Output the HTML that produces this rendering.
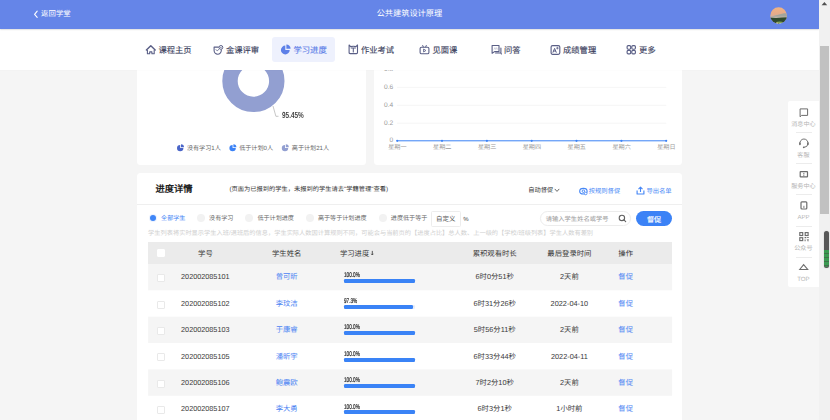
<!DOCTYPE html>
<html lang="zh-CN">
<head>
<meta charset="utf-8">
<title>公共建筑设计原理</title>
<style>
*{margin:0;padding:0;box-sizing:border-box;}
html,body{width:830px;height:420px;overflow:hidden;background:#f5f5f5;}
body{position:relative;font-family:"Liberation Sans",sans-serif;color:#333;-webkit-font-smoothing:antialiased;text-rendering:geometricPrecision;}
.abs{position:absolute;}
.t{position:absolute;white-space:nowrap;line-height:1;}
.c{transform:translateX(-50%);}
/* header */
#hdr{left:0;top:0;width:819px;height:28.5px;background:#6585e8;box-shadow:0 0.6px 1.6px rgba(0,0,0,.22);}
#nav{left:0;top:28.5px;width:819px;height:41.5px;background:#fff;box-shadow:0 0.4px 1.2px rgba(0,0,0,.05);}
.nt{font-size:8.3px;color:#3a3e5c;top:46.1px;-webkit-text-stroke:0.12px currentColor;}
.ni{position:absolute;top:43.5px;width:12px;height:12px;}
/* cards */
.card{background:#fff;border-radius:3.5px;}
/* table */
.th{font-size:7.35px;color:#333;}
.td{font-size:7.35px;color:#3a3a3a;}
.idn{font-size:7.28px;}
.lnk{color:#4c84f3;}
.nm{font-size:7.35px;}
.row{left:148.1px;width:524px;height:26.33px;background:#f5f5f5;}
.cb{position:absolute;left:157.2px;width:8.2px;height:8.2px;background:#fff;border:0.6px solid #e9e9e9;border-radius:1px;}
.pl{font-size:6.9px;color:#2e2e2e;transform:scaleX(.68);transform-origin:0 50%;left:343.9px;-webkit-text-stroke:0.22px #2e2e2e;}
.pb{position:absolute;left:343.9px;height:4.1px;border-radius:1.2px;background:#3a83f6;}
.pbg{position:absolute;left:343.9px;width:71.1px;height:4.1px;border-radius:1.2px;background:#e9eef8;}
/* filter */
.ft{font-size:6.1px;color:#666;top:216px;}
.rd{position:absolute;width:8.4px;height:8.4px;border-radius:50%;background:#f2f2f2;top:213.9px;}
/* side */
.sl{font-size:6.1px;color:#b4b4b4;left:803.4px;transform:translateX(-50%);}
.sd{position:absolute;left:795.5px;width:16px;height:0.6px;background:#ececec;}
.si{position:absolute;left:798px;width:12px;height:12px;}
.ax{font-size:6.6px;color:#999;}
.lg{font-size:6.1px;color:#666;top:146.2px;}
</style>
</head>
<body>

<!-- ========== content cards (under nav) ========== -->
<div class="abs card" id="card1" style="left:137.4px;top:40px;width:228.2px;height:124.6px;"></div>
<div class="abs card" id="card2" style="left:373.6px;top:40px;width:308.8px;height:124.6px;"></div>
<div class="abs card" id="card3" style="left:137.4px;top:173.3px;width:545px;height:260px;border-radius:3.5px 3.5px 0 0;"></div>

<!-- donut -->
<svg class="abs" style="left:137.4px;top:40px;" width="229" height="124" viewBox="137.4 40 229 124">
  <circle cx="253.8" cy="81" r="23.4" fill="none" stroke="#929fd1" stroke-width="15.4"/>
  <polyline points="273.4,106 276.3,116.3 278.9,116.3" fill="none" stroke="#999" stroke-width="0.55"/>
</svg>
<div class="t" style="left:282.1px;top:110.9px;font-size:8.8px;font-weight:bold;color:#444;transform:scaleX(.73);transform-origin:0 50%;">95.45%</div>

<!-- legend -->
<svg class="abs" style="left:176px;top:144.2px;" width="120" height="8" viewBox="0 0 120 8">
  <g id="pie1"><path d="M4.2 0.9 A3.2 3.2 0 1 0 7.4 4.1 L4.2 4.1Z" fill="#4a65c8"/><path d="M5 0.2 A3.1 3.1 0 0 1 8 3.3 L5 3.3Z" fill="#4a65c8"/></g>
  <g transform="translate(52.4 0)"><path d="M4.2 0.9 A3.2 3.2 0 1 0 7.4 4.1 L4.2 4.1Z" fill="#3b82f6"/><path d="M5 0.2 A3.1 3.1 0 0 1 8 3.3 L5 3.3Z" fill="#3b82f6"/></g>
  <g transform="translate(104.8 0)"><path d="M4.2 0.9 A3.2 3.2 0 1 0 7.4 4.1 L4.2 4.1Z" fill="#929fd1"/><path d="M5 0.2 A3.1 3.1 0 0 1 8 3.3 L5 3.3Z" fill="#929fd1"/></g>
</svg>
<div class="t lg" style="left:186.9px;">没有学习1人</div>
<div class="t lg" style="left:239.2px;">低于计划0人</div>
<div class="t lg" style="left:291.8px;">高于计划21人</div>

<!-- line chart -->
<svg class="abs" style="left:373.2px;top:40px;" width="309" height="124" viewBox="373.2 40 309 124">
  <g stroke="#eeeeee" stroke-width="0.6">
    <line x1="397.2" x2="666.4" y1="69.5" y2="69.5"/>
    <line x1="397.2" x2="666.4" y1="87.4" y2="87.4"/>
    <line x1="397.2" x2="666.4" y1="105.3" y2="105.3"/>
    <line x1="397.2" x2="666.4" y1="123.2" y2="123.2"/>
  </g>
  <line x1="397.2" x2="666.6" y1="140.8" y2="140.8" stroke="#3b82f6" stroke-width="1"/>
  <g fill="#3b82f6">
    <circle cx="397.4" cy="140.8" r="1.1"/><circle cx="442.2" cy="140.8" r="1.1"/><circle cx="487.1" cy="140.8" r="1.1"/>
    <circle cx="531.9" cy="140.8" r="1.1"/><circle cx="576.7" cy="140.8" r="1.1"/><circle cx="621.6" cy="140.8" r="1.1"/>
    <circle cx="666.4" cy="140.8" r="1.1"/>
  </g>
</svg>
<div class="t ax" style="right:436.8px;top:67.0px;">0.8</div>
<div class="t ax" style="right:436.8px;top:84.8px;">0.6</div>
<div class="t ax" style="right:436.8px;top:102.7px;">0.4</div>
<div class="t ax" style="right:436.8px;top:120.6px;">0.2</div>
<div class="t ax" style="right:436.8px;top:138.3px;">0</div>
<div class="t ax c" style="left:397.4px;top:144.6px;font-size:6.1px;">星期一</div>
<div class="t ax c" style="left:442.2px;top:144.6px;font-size:6.1px;">星期二</div>
<div class="t ax c" style="left:487.1px;top:144.6px;font-size:6.1px;">星期三</div>
<div class="t ax c" style="left:531.9px;top:144.6px;font-size:6.1px;">星期四</div>
<div class="t ax c" style="left:576.7px;top:144.6px;font-size:6.1px;">星期五</div>
<div class="t ax c" style="left:621.6px;top:144.6px;font-size:6.1px;">星期六</div>
<div class="t ax c" style="left:666.4px;top:144.6px;font-size:6.1px;">星期日</div>

<!-- ========== card3 : progress details ========== -->
<div class="t" style="left:155.4px;top:184.6px;font-size:9.3px;font-weight:bold;color:#222;">进度详情</div>
<div class="t" style="left:229.4px;top:187px;font-size:6.25px;color:#333;">(页面为已报到的学生，未报到的学生请去"学籍管理"查看)</div>
<div class="t" style="left:528.3px;top:187.5px;font-size:6.25px;color:#333;">自动督促</div>
<svg class="abs" style="left:554.2px;top:187.5px;" width="6" height="5" viewBox="0 0 6 5"><polyline points="1,1.2 3,3.4 5,1.2" fill="none" stroke="#444" stroke-width="0.8" stroke-linecap="round" stroke-linejoin="round"/></svg>
<svg class="abs" style="left:578.8px;top:186.7px;" width="9" height="9" viewBox="0 0 9 9"><ellipse cx="4.4" cy="4.2" rx="3.7" ry="2.8" fill="none" stroke="#4687f6" stroke-width="1.15"/><circle cx="4.4" cy="4.2" r="1.25" fill="none" stroke="#4687f6" stroke-width="0.95"/><circle cx="6.7" cy="6.5" r="1.3" fill="#fff" stroke="#4687f6" stroke-width="0.8"/></svg>
<div class="t" style="left:588.7px;top:189.1px;font-size:6.3px;color:#4687f6;">按规则督促</div>
<svg class="abs" style="left:636px;top:185.6px;" width="9" height="9" viewBox="0 0 9 9"><path d="M1.1 4.6 V8 H7.9 V4.6" fill="none" stroke="#4687f6" stroke-width="1.15" stroke-linejoin="round"/><path d="M4.5 6 V1.4 M2.5 3.1 L4.5 1.1 L6.5 3.1" fill="none" stroke="#4687f6" stroke-width="1.1" stroke-linejoin="round"/></svg>
<div class="t" style="left:646.4px;top:189.1px;font-size:6.3px;color:#4687f6;">导出名单</div>
<div class="abs" style="left:137.4px;top:203.9px;width:545px;height:0.7px;background:#efefef;"></div>

<!-- filter row -->
<div class="abs" style="left:150.1px;top:215.2px;width:5.9px;height:5.9px;border-radius:50%;background:#3f86f7;box-shadow:0 0 0 1.1px #edf3fe;"></div>
<div class="t ft" style="left:161.1px;color:#3b82f6;">全部学生</div>
<div class="rd" style="left:196.8px;"></div>
<div class="t ft" style="left:209.1px;">没有学习</div>
<div class="rd" style="left:245.1px;"></div>
<div class="t ft" style="left:257.4px;">低于计划进度</div>
<div class="rd" style="left:305.9px;"></div>
<div class="t ft" style="left:317.9px;">高于等于计划进度</div>
<div class="rd" style="left:378.7px;"></div>
<div class="t ft" style="left:390.8px;">进度低于等于</div>
<div class="abs" style="left:431.3px;top:211.4px;width:29.4px;height:15.2px;border:0.6px solid #ededed;border-radius:1.5px;background:#fff;"></div>
<div class="t" style="left:436px;top:217.1px;font-size:6.45px;color:#555;">自定义</div>
<div class="t" style="left:463.2px;top:216.9px;font-size:6px;color:#444;">%</div>
<div class="abs" style="left:540.2px;top:211.3px;width:90.6px;height:14.8px;border:0.6px solid #ececec;border-radius:7.4px;background:#fff;"></div>
<div class="t" style="left:545.8px;top:217.1px;font-size:6.28px;color:#999;">请输入学生姓名或学号</div>
<svg class="abs" style="left:618px;top:213.9px;" width="9" height="9" viewBox="0 0 9 9"><circle cx="3.9" cy="3.9" r="2.7" fill="none" stroke="#606060" stroke-width="1.1"/><line x1="5.9" y1="5.9" x2="7.7" y2="7.7" stroke="#606060" stroke-width="1.1" stroke-linecap="round"/></svg>
<div class="abs" style="left:636.1px;top:211px;width:35.9px;height:15px;border-radius:7.5px;background:#3b82f6;"></div>
<div class="t" style="left:646.9px;top:216.2px;font-size:7.2px;color:#fff;-webkit-text-stroke:0.15px #fff;">督促</div>
<div class="t" style="left:148.1px;top:231px;font-size:6.22px;color:#cfcfcf;">学生列表将实时显示学生入班/退班后的信息，学生实际人数因计算规则不同，可能会与当前页的【进度占比】总人数、上一级的【学校/班级列表】学生人数有差别</div>

<!-- table -->
<div class="abs" style="left:148.1px;top:241.9px;width:524px;height:22.2px;background:#ebebeb;"></div>
<div class="cb" style="top:248.8px;border-color:#fff;"></div>
<div class="t th c" style="left:205.4px;top:249.7px;">学号</div>
<div class="t th c" style="left:286.7px;top:249.7px;">学生姓名</div>
<div class="t th" style="left:339.9px;top:249.7px;">学习进度</div>
<svg class="abs" style="left:370.4px;top:250.2px;" width="5" height="7" viewBox="0 0 5 7"><path d="M2.3 0.9 V4.8 M1.3 3.8 L2.3 5 L3.3 3.8" fill="none" stroke="#444" stroke-width="0.9"/></svg>
<div class="t th c" style="left:494.7px;top:249.7px;">累积观看时长</div>
<div class="t th c" style="left:569.4px;top:249.7px;">最后登录时间</div>
<div class="t th" style="left:618.3px;top:249.7px;">操作</div>

<!--ROWS-->
<!-- row 1 -->
<svg class="abs" style="left:148px;top:263px;" width="525" height="29" viewBox="0 0 525 29"><rect x="0.1" y="1" width="524" height="26.35" fill="#f5f5f5"/></svg>
<div class="cb" style="top:274.18px;"></div>
<div class="t td idn c" style="left:205.3px;top:273.48px;">202002085101</div>
<div class="t td nm c lnk" style="left:286.7px;top:273.48px;">曾可昕</div>
<div class="t pl" style="top:272.78px;">100.0%</div>
<div class="pbg" style="top:278.57px;"></div>
<div class="pb" style="top:278.57px;width:71.1px;"></div>
<div class="t td c" style="left:494.7px;top:273.48px;">6时0分51秒</div>
<div class="t td c" style="left:569.4px;top:273.48px;">2天前</div>
<div class="t td lnk" style="left:618.3px;top:273.48px;">督促</div>
<!-- row 2 -->
<div class="cb" style="top:300.53px;"></div>
<div class="t td idn c" style="left:205.3px;top:299.83px;">202002085102</div>
<div class="t td nm c lnk" style="left:286.7px;top:299.83px;">李玟洁</div>
<div class="t pl" style="top:299.13px;">97.3%</div>
<div class="pbg" style="top:304.93px;"></div>
<div class="pb" style="top:304.93px;width:69.18px;"></div>
<div class="t td c" style="left:494.7px;top:299.83px;">6时31分26秒</div>
<div class="t td c" style="left:569.4px;top:299.83px;">2022-04-10</div>
<div class="t td lnk" style="left:618.3px;top:299.83px;">督促</div>
<!-- row 3 -->
<svg class="abs" style="left:148px;top:315px;" width="525" height="29" viewBox="0 0 525 29"><rect x="0.1" y="1.7" width="524" height="26.35" fill="#f5f5f5"/></svg>
<div class="cb" style="top:326.88px;"></div>
<div class="t td idn c" style="left:205.3px;top:326.18px;">202002085103</div>
<div class="t td nm c lnk" style="left:286.7px;top:326.18px;">于康睿</div>
<div class="t pl" style="top:325.48px;">100.0%</div>
<div class="pbg" style="top:331.27px;"></div>
<div class="pb" style="top:331.27px;width:71.1px;"></div>
<div class="t td c" style="left:494.7px;top:326.18px;">5时56分11秒</div>
<div class="t td c" style="left:569.4px;top:326.18px;">2天前</div>
<div class="t td lnk" style="left:618.3px;top:326.18px;">督促</div>
<!-- row 4 -->
<div class="cb" style="top:353.23px;"></div>
<div class="t td idn c" style="left:205.3px;top:352.53px;">202002085105</div>
<div class="t td nm c lnk" style="left:286.7px;top:352.53px;">潘昕宇</div>
<div class="t pl" style="top:351.83px;">100.0%</div>
<div class="pbg" style="top:357.62px;"></div>
<div class="pb" style="top:357.62px;width:71.1px;"></div>
<div class="t td c" style="left:494.7px;top:352.53px;">6时33分44秒</div>
<div class="t td c" style="left:569.4px;top:352.53px;">2022-04-11</div>
<div class="t td lnk" style="left:618.3px;top:352.53px;">督促</div>
<!-- row 5 -->
<svg class="abs" style="left:148px;top:368px;" width="525" height="29" viewBox="0 0 525 29"><rect x="0.1" y="1.4" width="524" height="26.35" fill="#f5f5f5"/></svg>
<div class="cb" style="top:379.57px;"></div>
<div class="t td idn c" style="left:205.3px;top:378.88px;">202002085106</div>
<div class="t td nm c lnk" style="left:286.7px;top:378.88px;">鲍震欧</div>
<div class="t pl" style="top:378.18px;">100.0%</div>
<div class="pbg" style="top:383.97px;"></div>
<div class="pb" style="top:383.97px;width:71.1px;"></div>
<div class="t td c" style="left:494.7px;top:378.88px;">7时2分10秒</div>
<div class="t td c" style="left:569.4px;top:378.88px;">2天前</div>
<div class="t td lnk" style="left:618.3px;top:378.88px;">督促</div>
<!-- row 6 -->
<div class="cb" style="top:405.93px;"></div>
<div class="t td idn c" style="left:205.3px;top:405.23px;">202002085107</div>
<div class="t td nm c lnk" style="left:286.7px;top:405.23px;">李大勇</div>
<div class="t pl" style="top:404.53px;">100.0%</div>
<div class="pbg" style="top:410.32px;"></div>
<div class="pb" style="top:410.32px;width:71.1px;"></div>
<div class="t td c" style="left:494.7px;top:405.23px;">6时3分1秒</div>
<div class="t td c" style="left:569.4px;top:405.23px;">1小时前</div>
<div class="t td lnk" style="left:618.3px;top:405.23px;">督促</div>
<!--/ROWS-->

<!-- ========== fixed header & nav (over content) ========== -->
<div class="abs" id="nav"></div>
<div class="abs" style="left:272.3px;top:36.8px;width:62.3px;height:25.6px;border-radius:3px;background:#eef1fd;"></div>
<div class="abs" id="hdr"></div>
<svg class="abs" style="left:33.4px;top:9.6px;" width="6" height="9" viewBox="0 0 6 9"><polyline points="4.2,1.2 1.6,4.3 4.2,7.4" fill="none" stroke="#fff" stroke-width="1.1" stroke-linecap="round" stroke-linejoin="round"/></svg>
<div class="t" style="left:41.1px;top:9.9px;font-size:7.4px;color:#fff;">返回学堂</div>
<div class="t c" style="left:409.4px;top:10.2px;font-size:8.2px;color:#fff;">公共建筑设计原理</div>
<svg class="abs" style="left:770px;top:7px;" width="17" height="17" viewBox="0 0 17 17">
  <defs>
    <clipPath id="avc"><circle cx="8.6" cy="8.5" r="8.3"/></clipPath>
    <linearGradient id="avg" x1="0" y1="0" x2="0" y2="1"><stop offset="0" stop-color="#f3b380"/><stop offset="0.42" stop-color="#e4ab8b"/><stop offset="0.6" stop-color="#cfb0a0"/></linearGradient>
    <filter id="avb" x="-20%" y="-20%" width="140%" height="140%"><feGaussianBlur stdDeviation="0.55"/></filter>
  </defs>
  <g clip-path="url(#avc)">
    <rect x="0" y="0" width="17" height="17" fill="url(#avg)"/>
    <g filter="url(#avb)">
      <path d="M-1 10.2 L5 8.6 L10 7.2 L14 6.2 L18 6.6 V12 H-1Z" fill="#a3a59c"/>
      <rect x="-1" y="9.6" width="19" height="1.6" fill="#c9b9ab" opacity="0.85"/>
      <path d="M-1 10.6 L6 10.9 L12 10.6 L18 10.2 V18 H-1Z" fill="#2f4a2d"/>
      <ellipse cx="9.6" cy="15.6" rx="3.2" ry="1.1" fill="#7ea258"/>
      <ellipse cx="7" cy="16.2" rx="1.3" ry="0.7" fill="#d8c89a"/>
      <ellipse cx="10.6" cy="16.6" rx="1.4" ry="0.6" fill="#d2dcc2"/>
    </g>
  </g>
</svg>

<!-- nav items -->
<svg class="ni" style="left:144.6px;" viewBox="0 0 12 12"><path d="M1.4 6.1 L5.8 1.8 L10.2 6.1" fill="none" stroke="#5a5f86" stroke-width="1.45" stroke-linejoin="round" stroke-linecap="round"/><path d="M2.4 6 V9.8 H4.7 V7.9 H6.9 V9.8 H9.2 V6" fill="none" stroke="#5a5f86" stroke-width="1.1" stroke-linejoin="round"/></svg>
<div class="t nt" style="left:158.4px;">课程主页</div>
<svg class="ni" style="left:212.5px;" viewBox="0 0 12 12"><path d="M5.4 3.1 H1.1 V6.6 A3.6 3.6 0 0 0 8.3 6.6 V5.9" fill="none" stroke="#5a5f86" stroke-width="1.1" stroke-linecap="round" stroke-linejoin="round"/><circle cx="7.9" cy="3.4" r="1.9" fill="#fff" stroke="#5a5f86" stroke-width="1"/><circle cx="7.9" cy="3.4" r="0.6" fill="#5a5f86"/><path d="M3 5.6 L4.2 6.9 L6 5.2" fill="none" stroke="#5a5f86" stroke-width="0.8" stroke-linecap="round" stroke-linejoin="round"/></svg>
<div class="t nt" style="left:225.9px;">金课评审</div>
<svg class="ni" style="left:279.5px;" viewBox="0 0 12 12"><path d="M5.3 1.6 A4.4 4.4 0 1 0 9.7 6 L5.3 6Z" fill="#5d80e8"/><path d="M6.4 0.6 A4.2 4.2 0 0 1 10.6 4.8 L6.4 4.8Z" fill="#5d80e8"/></svg>
<div class="t nt" style="left:293.5px;color:#5d80e8;">学习进度</div>
<svg class="ni" style="left:347.5px;" viewBox="0 0 12 12"><path d="M1.1 1 L2.6 2.6 Q5.3 1.9 8 2.6 L9.5 1 V8.6 Q9.5 9.6 8.5 9.6 H2.1 Q1.1 9.6 1.1 8.6Z" fill="none" stroke="#5a5f86" stroke-width="1.1" stroke-linejoin="round"/><path d="M3.2 4 H7.4 M5.3 4 V7.9" fill="none" stroke="#5a5f86" stroke-width="1.05" stroke-linecap="round"/></svg>
<div class="t nt" style="left:360.9px;">作业考试</div>
<svg class="ni" style="left:418.6px;" viewBox="0 0 12 12"><rect x="1.1" y="3.2" width="8.8" height="6.6" rx="1.4" fill="none" stroke="#5a5f86" stroke-width="1.1"/><path d="M3.7 1.5 L4.3 2.9 M7.3 1.5 L6.7 2.9" fill="none" stroke="#5a5f86" stroke-width="1" stroke-linecap="round"/><path d="M4.6 5 L6.9 6.5 L4.6 8Z" fill="none" stroke="#5a5f86" stroke-width="0.85" stroke-linejoin="round"/></svg>
<div class="t nt" style="left:432.4px;">见面课</div>
<svg class="ni" style="left:490.5px;" viewBox="0 0 12 12"><path d="M1.1 1.5 H8 V7.6 H3.6 L1.1 9.3Z" fill="none" stroke="#5a5f86" stroke-width="1.1" stroke-linejoin="round"/><path d="M9.9 4 V9 L10.4 10 M9.9 9 H4.6" fill="none" stroke="#5a5f86" stroke-width="1.1" stroke-linejoin="round" stroke-linecap="round"/><path d="M3 5.6 L3.9 3.6 L4.8 5.6 L5.7 3.6 L6.6 5.6" fill="none" stroke="#b9bbcc" stroke-width="0.6"/></svg>
<div class="t nt" style="left:503.9px;">问答</div>
<svg class="ni" style="left:549.5px;" viewBox="0 0 12 12"><rect x="1.1" y="1.6" width="8.7" height="8.7" rx="1.5" fill="none" stroke="#5a5f86" stroke-width="1.15"/><path d="M3 8.3 L4.6 4.4 L6.2 8.3 M3.7 7 H5.5" fill="none" stroke="#5a5f86" stroke-width="1" stroke-linecap="round" stroke-linejoin="round"/><path d="M7.4 3.2 V5 M6.5 4.1 H8.3" fill="none" stroke="#5a5f86" stroke-width="0.8" stroke-linecap="round"/></svg>
<div class="t nt" style="left:563px;">成绩管理</div>
<svg class="ni" style="left:625.5px;" viewBox="0 0 12 12"><g fill="none" stroke="#5a5f86" stroke-width="1.15"><rect x="1.1" y="1.6" width="3.6" height="3.6" rx="1.1"/><rect x="5.8" y="1.6" width="3.6" height="3.6" rx="1.1"/><rect x="1.1" y="6.3" width="3.6" height="3.6" rx="1.1"/><rect x="5.8" y="6.3" width="3.6" height="3.6" rx="1.1"/></g></svg>
<div class="t nt" style="left:639.1px;">更多</div>

<!-- ========== floating side panel ========== -->
<div class="abs" style="left:787.8px;top:101px;width:31.2px;height:186.4px;background:#fff;border-radius:2px 0 0 2px;"></div>
<div class="sd" style="top:131.8px;"></div><div class="sd" style="top:163.1px;"></div><div class="sd" style="top:194.4px;"></div><div class="sd" style="top:225.7px;"></div><div class="sd" style="top:257px;"></div>
<svg class="si" style="top:106px;" viewBox="0 0 12 12"><path d="M2.1 2.9 H9.6 V9.4 H3.6 L2.1 10.8Z" fill="none" stroke="#6c6c6c" stroke-width="1" stroke-linejoin="round"/></svg>
<div class="t sl" style="top:122.0px;">消息中心</div>
<svg class="si" style="top:137px;" viewBox="0 0 12 12"><path d="M1.9 7 A4.1 4.1 0 1 1 9.9 7 Q9.6 10.2 6 10.4" fill="none" stroke="#6c6c6c" stroke-width="0.95" stroke-linecap="round"/><path d="M1.9 6 V7.4 M9.9 6 V7.4" stroke="#6c6c6c" stroke-width="1.5" stroke-linecap="round"/><circle cx="5.7" cy="10.4" r="0.8" fill="#6c6c6c"/></svg>
<div class="t sl" style="top:153.0px;">客服</div>
<svg class="si" style="top:168px;" viewBox="0 0 12 12"><rect x="2.2" y="3.6" width="7.3" height="5.3" rx="0.5" fill="none" stroke="#6c6c6c" stroke-width="1.2"/><path d="M5.85 4.9 V6.5" stroke="#6c6c6c" stroke-width="1" /><circle cx="5.85" cy="7.6" r="0.55" fill="#6c6c6c"/></svg>
<div class="t sl" style="top:184.2px;">服务中心</div>
<svg class="si" style="top:199px;" viewBox="0 0 12 12"><rect x="3" y="2.9" width="5.8" height="7.1" rx="0.9" fill="none" stroke="#6c6c6c" stroke-width="1.2"/><path d="M5.9 7.2 V8.6" stroke="#6c6c6c" stroke-width="0.9" stroke-linecap="round"/></svg>
<div class="t sl" style="top:215.0px;font-size:6px;">APP</div>
<svg class="si" style="top:230px;" viewBox="0 0 12 12"><g fill="none" stroke="#6c6c6c" stroke-width="1.15"><rect x="1.8" y="2.6" width="2.9" height="2.9"/><rect x="7.2" y="2.6" width="2.9" height="2.9"/><rect x="1.8" y="7.7" width="2.9" height="2.9"/></g><path d="M6.6 7.1 H8.3 V8.3 H6.6Z M9.2 7.1 H10.7 V8 H9.2Z M6.6 9.4 H7.6 V11.2 H6.6Z M8.4 9.2 H10.7 V10 H9.4 V11.2 H10.7 V10.4" fill="#6c6c6c"/></svg>
<div class="t sl" style="top:245.8px;">公众号</div>
<svg class="si" style="top:261px;" viewBox="0 0 12 12"><path d="M1.7 8.5 L5.6 3.7 L9.7 8.5Z" fill="none" stroke="#6c6c6c" stroke-width="1.1" stroke-linejoin="miter"/></svg>
<div class="t sl" style="top:277.4px;font-size:6.1px;">TOP</div>

<!-- ========== scrollbar ========== -->
<div class="abs" style="left:819px;top:0;width:11px;height:420px;background:#f1f1f1;"></div>
<div class="abs" style="left:820.4px;top:46px;width:8.4px;height:168px;background:#c1c1c1;"></div>
<svg class="abs" style="left:821.4px;top:1.4px;" width="7" height="5" viewBox="0 0 7 5"><path d="M0.6 4.2 L3.4 1 L6.2 4.2Z" fill="#505050"/></svg>
<div class="abs" style="left:823.5px;top:230.8px;width:5.3px;height:37px;border-radius:2.65px;background:#575757;box-shadow:0 0 1.2px rgba(0,0,0,.3);overflow:hidden;">
  <div style="position:absolute;left:0.3px;right:0.3px;top:19px;height:17.4px;border-radius:0 0 2.4px 2.4px;background:repeating-linear-gradient(180deg,#3b9a52 0,#3b9a52 3.1px,#3f7349 3.1px,#3f7349 3.9px);"></div>
</div>

</body>
</html>
